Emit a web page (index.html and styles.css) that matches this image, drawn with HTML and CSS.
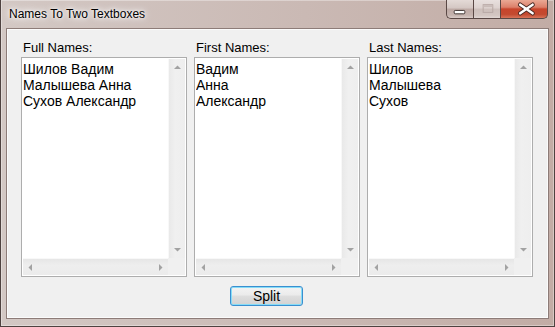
FILE: index.html
```html
<!DOCTYPE html>
<html lang="ru">
<head>
<meta charset="utf-8">
<title>Names To Two Textboxes</title>
<link rel="stylesheet" href="styles.css">
</head>
<body>
<div class="window">
  <div class="titlebar">
    <span class="title">Names To Two Textboxes</span>
    <div class="caption-buttons">
      <div class="cbtn min"><svg width="27" height="18" viewBox="0 0 27 18"><rect x="7.5" y="10.5" width="11" height="3.5" rx="1" fill="#fff" stroke="#3b3230" stroke-width="1"/></svg></div>
      <div class="cbtn max"><svg width="27" height="18" viewBox="0 0 27 18"><rect x="9.5" y="4.5" width="10" height="8" fill="none" stroke="#b7a8a4" stroke-width="1"/><rect x="10" y="5" width="9" height="2" fill="#c9bcb8"/></svg></div>
      <div class="cbtn close"><svg width="48" height="18" viewBox="0 0 48 18"><path d="M20 4.5 L33 13.5 M33 4.5 L20 13.5" stroke="#4a2a24" stroke-width="4.6" stroke-linecap="round"/><path d="M20 4.5 L33 13.5 M33 4.5 L20 13.5" stroke="#fff" stroke-width="2.6" stroke-linecap="round"/></svg></div>
    </div>
  </div>
  <div class="client">
    <div class="columns">
      <div class="col">
        <div class="label">Full Names:</div>
        <div class="listbox">
          <div class="items">
            <div>Шилов Вадим</div>
            <div>Малышева Анна</div>
            <div>Сухов Александр</div>
          </div>
          <div class="vscroll">
            <svg class="arrow" width="17" height="17" viewBox="0 0 17 17"><polygon points="5,10 8.5,6.5 12,10" fill="#a2a2a2"/></svg>
            <svg class="arrow" width="17" height="17" viewBox="0 0 17 17"><polygon points="5,7 12,7 8.5,10.5" fill="#a2a2a2"/></svg>
          </div>
          <div class="hscroll">
            <svg class="arrow" width="17" height="17" viewBox="0 0 17 17"><polygon points="9,5 9,12 5.5,8.5" fill="#a2a2a2"/></svg>
            <svg class="arrow" width="17" height="17" viewBox="0 0 17 17"><polygon points="8,5 8,12 11.5,8.5" fill="#a2a2a2"/></svg>
          </div>
          <div class="corner"></div>
        </div>
      </div>
      <div class="col">
        <div class="label">First Names:</div>
        <div class="listbox">
          <div class="items">
            <div>Вадим</div>
            <div>Анна</div>
            <div>Александр</div>
          </div>
          <div class="vscroll">
            <svg class="arrow" width="17" height="17" viewBox="0 0 17 17"><polygon points="5,10 8.5,6.5 12,10" fill="#a2a2a2"/></svg>
            <svg class="arrow" width="17" height="17" viewBox="0 0 17 17"><polygon points="5,7 12,7 8.5,10.5" fill="#a2a2a2"/></svg>
          </div>
          <div class="hscroll">
            <svg class="arrow" width="17" height="17" viewBox="0 0 17 17"><polygon points="9,5 9,12 5.5,8.5" fill="#a2a2a2"/></svg>
            <svg class="arrow" width="17" height="17" viewBox="0 0 17 17"><polygon points="8,5 8,12 11.5,8.5" fill="#a2a2a2"/></svg>
          </div>
          <div class="corner"></div>
        </div>
      </div>
      <div class="col">
        <div class="label">Last Names:</div>
        <div class="listbox">
          <div class="items">
            <div>Шилов</div>
            <div>Малышева</div>
            <div>Сухов</div>
          </div>
          <div class="vscroll">
            <svg class="arrow" width="17" height="17" viewBox="0 0 17 17"><polygon points="5,10 8.5,6.5 12,10" fill="#a2a2a2"/></svg>
            <svg class="arrow" width="17" height="17" viewBox="0 0 17 17"><polygon points="5,7 12,7 8.5,10.5" fill="#a2a2a2"/></svg>
          </div>
          <div class="hscroll">
            <svg class="arrow" width="17" height="17" viewBox="0 0 17 17"><polygon points="9,5 9,12 5.5,8.5" fill="#a2a2a2"/></svg>
            <svg class="arrow" width="17" height="17" viewBox="0 0 17 17"><polygon points="8,5 8,12 11.5,8.5" fill="#a2a2a2"/></svg>
          </div>
          <div class="corner"></div>
        </div>
      </div>
    </div>
    <div class="actions">
      <button class="btn" type="button">Split</button>
    </div>
  </div>
</div>
</body>
</html>
```

FILE: styles.css
```css
html, body {
  margin: 0;
  padding: 0;
}

body {
  width: 555px;
  height: 327px;
  overflow: hidden;
  font-family: "Liberation Sans", Arial, sans-serif;
  color: #000;
}

.window {
  width: 555px;
  height: 327px;
  box-sizing: border-box;
  display: flex;
  flex-direction: column;
  padding: 0 6px 8px 6px;
  border: 1px solid #4e4240;
  border-top: none;
  background: linear-gradient(to right, #d3c8c4 0%, #cab9b4 55%, #c2aca5 100%);
  box-shadow: inset 0 0 0 1px rgba(255, 255, 255, 0.35);
}

.titlebar {
  height: 29px;
  flex: none;
  display: flex;
  align-items: flex-start;
}

.title {
  padding: 7px 0 0 2px;
  font-size: 12px;
  line-height: 15px;
  color: #000;
  text-shadow: 0 0 6px #fff, 0 0 10px rgba(255, 255, 255, 0.9), 0 0 3px rgba(255, 255, 255, 0.9);
}

.caption-buttons {
  margin-left: auto;
  display: flex;
  height: 19px;
}

.cbtn {
  box-sizing: border-box;
  height: 19px;
  border: 1px solid #5a4845;
  border-top: none;
  display: flex;
}

.cbtn.min {
  width: 27px;
  border-right: none;
  border-bottom-left-radius: 5px;
  background: linear-gradient(#e4dad7 0%, #d4c7c3 45%, #bda9a4 50%, #c6b4af 85%, #d8cbc7 100%);
}

.cbtn.max {
  width: 27px;
  border-right: none;
  background: linear-gradient(#e8e0de 0%, #ddd2cf 45%, #cdbfbb 50%, #d3c6c2 85%, #e0d6d3 100%);
}

.cbtn.close {
  width: 48px;
  border-bottom-right-radius: 5px;
  background: linear-gradient(#eaa995 0%, #dc806a 40%, #c8452c 50%, #c34a30 80%, #d8745a 100%);
}

.client {
  flex: 1;
  box-sizing: border-box;
  background: #f0f0f0;
  border: 1px solid #fbfbfb;
  box-shadow: 0 0 0 1px #8d7c78;
  padding: 10px 13px 0 13px;
  display: flex;
  flex-direction: column;
}

.columns {
  display: grid;
  grid-template-columns: repeat(3, 166px);
  column-gap: 7px;
}

.label {
  font-size: 13px;
  line-height: 15px;
  height: 15px;
  padding-left: 2px;
  margin-bottom: 2px;
}

.listbox {
  box-sizing: border-box;
  height: 220px;
  border: 1px solid #adadad;
  padding: 1px;
  background: #fff;
  display: grid;
  grid-template-columns: 1fr 17px;
  grid-template-rows: 1fr 17px;
}

.items {
  padding-top: 2px;
  font-size: 14px;
  line-height: 16px;
  white-space: nowrap;
  overflow: hidden;
}

.vscroll {
  background: linear-gradient(to right, #e9e9e9, #f0f0f0 40%, #eeeeee);
  border-left: 1px solid #f8f8f8;
  display: flex;
  flex-direction: column;
  justify-content: space-between;
  align-items: center;
}

.hscroll {
  background: linear-gradient(#e6e6e6, #eeeeee 40%, #ebebeb);
  border-top: 1px solid #f8f8f8;
  display: flex;
  justify-content: space-between;
  align-items: center;
}

.arrow {
  display: block;
  flex: none;
}

.corner {
  background: #f0f0f0;
}

.actions {
  display: flex;
  padding-left: 209px;
  margin-top: 9px;
}

.btn {
  width: 73px;
  height: 20px;
  box-sizing: border-box;
  padding: 0;
  border: 1px solid #3a8fd0;
  border-radius: 3px;
  box-shadow: inset 0 0 0 1px #86dcf7;
  background: linear-gradient(#f3f3f3 0%, #ebebeb 45%, #dedede 50%, #d2d2d2 100%);
  font-family: "Liberation Sans", Arial, sans-serif;
  font-size: 14px;
  line-height: 16px;
  color: #000;
}
```
